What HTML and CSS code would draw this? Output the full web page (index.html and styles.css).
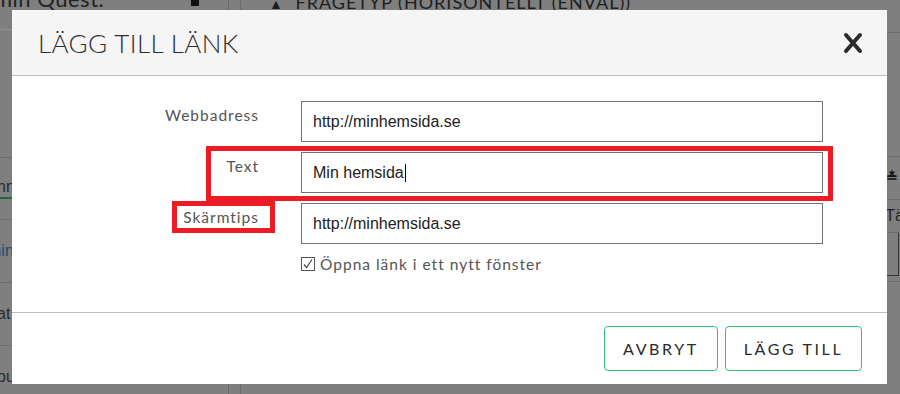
FILE: index.html
```html
<!DOCTYPE html>
<html lang="sv">
<head>
<meta charset="utf-8">
<title>Lägg till länk</title>
<link rel="stylesheet" href="styles.css">
</head>
<body>
<div class="page">
  <aside class="side">
    <div class="side-top"><span class="side-title">min Quest.</span><span class="side-sq"></span></div>
    <div class="side-row h128"></div>
    <div class="side-row h62"><span class="side-txt tab">nn</span></div>
    <div class="side-row h63"><span class="side-txt link">min</span></div>
    <div class="side-row h63"><span class="side-txt">at</span></div>
    <div class="side-row last"><span class="side-txt">ou</span></div>
  </aside>
  <div class="rail"></div>
  <main class="main">
    <div class="main-top"><span class="tri">▲</span> FRÅGETYP (HORISONTELLT (ENVAL))</div>
    <div class="main-row h124"></div>
    <div class="main-row h43"><span class="main-icon">≛</span></div>
    <div class="main-row h33"><span class="main-txt">Tä</span></div>
    <div class="main-box"></div>
    <div class="main-row last"></div>
  </main>
</div>

<div class="modal" role="dialog" aria-labelledby="mt">
  <header class="modal-head">
    <h1 id="mt" class="modal-title">LÄGG TILL LÄNK</h1>
    <button class="close" aria-label="Stäng">
      <svg width="20" height="22" viewBox="0 0 20 22"><path d="M3 3 L17 19 M17 3 L3 19" stroke="#2b2b2b" stroke-width="4" stroke-linecap="round"/></svg>
    </button>
  </header>
  <div class="modal-body">
    <div class="form">
      <label class="lbl">Webbadress</label>
      <div class="field">http://minhemsida.se</div>
      <label class="lbl">Text</label>
      <div class="field">Min hemsida<span class="caret"></span></div>
      <label class="lbl"><span class="mark-wrap">Skärmtips<span class="mark small"></span></span></label>
      <div class="field">http://minhemsida.se</div>
      <div class="spacer"></div>
      <div class="check">
        <svg class="cb" width="14" height="14" viewBox="0 0 14 14"><rect x="0.5" y="0.5" width="13" height="13" fill="#fff" stroke="#555"/><path d="M3 7.5 L5.6 10.6 L11 2.5" fill="none" stroke="#444" stroke-width="1.2"/></svg>
        <span>Öppna länk i ett nytt fönster</span>
      </div>
    </div>
    <div class="mark big"></div>
  </div>
  <footer class="modal-foot">
    <button class="btn">AVBRYT</button>
    <button class="btn">LÄGG TILL</button>
  </footer>
</div>
</body>
</html>
```
FILE: styles.css
```css
* { box-sizing: border-box; }
html, body { margin: 0; padding: 0; }
body {
  width: 900px;
  height: 394px;
  overflow: hidden;
  background: #7f7f7f;
  font-family: "Liberation Sans", Arial, sans-serif;
  position: relative;
}

/* dimmed page behind */
.page {
  display: grid;
  grid-template-columns: 229px 12px 1fr;
  height: 394px;
}
.side { display: flex; flex-direction: column; border-right: 1px solid #6b6b6b; }
.side-top {
  height: 30px;
  display: flex;
  align-items: flex-start;
  justify-content: space-between;
  padding-right: 29px;
  border-bottom: 1px solid #8e8e8e;
}
.side-title { font-family: Lato, sans-serif; font-size: 22px; color: #222; margin-top: -15px; margin-left: -6px; letter-spacing: 0.5px; }
.side-sq { width: 8px; height: 6px; background: #111; }
.side-row { border-bottom: 1px solid #6e6e6e; }
.h128 { height: 128px; }
.h62 { height: 62px; }
.h63 { height: 63px; }
.side-row.last { flex: 1; border-bottom: 0; }
.side-txt { display: inline-block; font-size: 16px; color: #2a2a2a; margin-left: -3px; margin-top: 22px; }
.side-txt.tab { border-bottom: 2px solid #1d6b3b; padding-bottom: 1px; margin-top: 20px; }
.side-txt.link { color: #1f4b6e; margin-left: -12px; }
.rail { border-right: 1px solid #6b6b6b; }
.main { display: flex; flex-direction: column; }
.main-top {
  border-bottom: 1px solid #6b6b6b;
  font-family: Lato, sans-serif;
  font-size: 18px;
  letter-spacing: 1px;
  color: #1e1e1e;
  padding-left: 28px;
  margin-top: -9px;
  height: 42px;
}
.tri { font-size: 14px; margin-right: 6px; }
.main-row { border-bottom: 1px solid #6b6b6b; display: flex; justify-content: flex-end; }
.h124 { height: 124px; }
.h43 { height: 43px; }
.h33 { height: 33px; }
.main-icon { font-size: 14px; color: #111; margin-top: 12px; margin-right: 2px; font-weight: bold; }
.main-txt { font-size: 16px; color: #222; margin-top: 7px; margin-right: -4px; }
.main-box { height: 43px; margin-left: auto; width: 20px; margin-right: 1px; border: 1px solid #333; border-left: 0; border-top: 0; }
.main-row.last { height: 6px; }

/* modal */
.modal {
  position: absolute;
  left: 12px;
  top: 10px;
  width: 875px;
  height: 374px;
  background: #fff;
  display: flex;
  flex-direction: column;
  font-family: Lato, "Noto Sans", sans-serif;
}
.modal-head {
  height: 66px;
  background: #f5f5f5;
  border-bottom: 1px solid #bdbdbd;
  display: flex;
  align-items: center;
  justify-content: space-between;
  padding: 0 24px 0 26px;
}
.modal-title {
  margin: 0;
  font-size: 26px;
  font-weight: 300;
  letter-spacing: 0.4px;
  color: #2e2e2e;
}
.close { background: none; border: 0; padding: 0; width: 20px; height: 22px; display: block; }
.close svg { display: block; }

.modal-body { height: 236px; padding-top: 25px; position: relative; }
.form {
  display: grid;
  grid-template-columns: 247px 522px;
  column-gap: 42px;
  row-gap: 10px;
}
.lbl {
  text-align: right;
  font-size: 15.5px;
  color: #555;
  padding-top: 5px;
  line-height: 18px;
  letter-spacing: 1px;
}
.field {
  height: 41px;
  border: 1px solid #727272;
  padding: 0 11px;
  font-family: "Liberation Sans", Arial, sans-serif;
  font-size: 16px;
  color: #222;
  display: flex;
  align-items: center;
}
.caret { width: 1px; height: 18px; background: #000; margin-left: 1px; }
.check {
  display: flex;
  align-items: center;
  gap: 5px;
  font-size: 15.5px;
  color: #555;
  letter-spacing: 1px;
  margin-top: 1px;
}
.cb { display: block; }

.mark-wrap { position: relative; display: inline-block; }
.mark { position: absolute; border: 5px solid #ec1c24; }
.mark.small { left: -11px; right: -16px; top: -7px; bottom: -7px; }
.mark.big { left: 194px; top: 70px; width: 627px; height: 55px; }

.modal-foot {
  margin-top: auto;
  height: 72px;
  border-top: 1px solid #bdbdbd;
  display: flex;
  justify-content: flex-end;
  align-items: center;
  gap: 7px;
  padding-right: 25px;
}
.btn {
  height: 45px;
  background: #fff;
  border: 1px solid #2fc56d;
  border-radius: 4px;
  font-family: Lato, "Noto Sans", sans-serif;
  font-size: 16px;
  letter-spacing: 2.6px;
  color: #2a2a2a;
  padding: 0;
}
.btn:first-child { width: 114px; }
.btn:last-child { width: 137px; }
```
